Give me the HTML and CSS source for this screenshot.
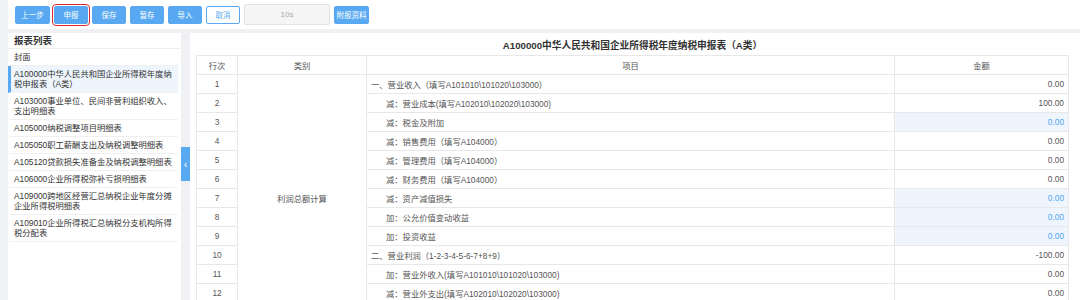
FILE: index.html
```html
<!DOCTYPE html>
<html lang="zh-CN">
<head>
<meta charset="UTF-8" />
<title>企业所得税年度纳税申报</title>
<link rel="stylesheet" href="styles.css">
</head>
<body>

<div class="toolbar">
  <button class="btn btn-wide">上一步</button>
  <button class="btn btn-marked">申报</button>
  <button class="btn">保存</button>
  <button class="btn">暂存</button>
  <button class="btn">导入</button>
  <button class="btn btn-plain">取消</button>
  <div class="timer">10s</div>
  <button class="btn btn-wide">附报资料</button>
</div>

<div class="workspace">
  <div class="sidebar">
    <div class="sidebar-title">报表列表</div>
    <ul class="report-list">
      <li>封面</li>
      <li class="active">A100000中华人民共和国企业所得税年度纳税申报表（A类）</li>
      <li>A103000事业单位、民间非营利组织收入、支出明细表</li>
      <li>A105000纳税调整项目明细表</li>
      <li>A105050职工薪酬支出及纳税调整明细表</li>
      <li>A105120贷款损失准备金及纳税调整明细表</li>
      <li>A106000企业所得税弥补亏损明细表</li>
      <li>A109000跨地区经营汇总纳税企业年度分摊企业所得税明细表</li>
      <li>A109010企业所得税汇总纳税分支机构所得税分配表</li>
    </ul>
  </div>

  <div class="gutter">
    <div class="collapse">&#8249;</div>
  </div>

  <div class="main">
    <h1 class="report-title">A100000中华人民共和国企业所得税年度纳税申报表（A类）</h1>
    <table class="report">
      <colgroup>
        <col class="c-no"><col class="c-cat"><col class="c-item"><col class="c-amt">
      </colgroup>
      <thead>
        <tr><th>行次</th><th>类别</th><th>项目</th><th>金额</th></tr>
      </thead>
      <tbody>
        <tr><td class="no">1</td><td class="cat" rowspan="13">利润总额计算</td><td>一、营业收入（填写A101010\101020\103000）</td><td class="amt">0.00</td></tr>
        <tr><td class="no">2</td><td class="sub">减：营业成本(填写A102010\102020\103000)</td><td class="amt">100.00</td></tr>
        <tr><td class="no">3</td><td class="sub">减：税金及附加</td><td class="amt edit">0.00</td></tr>
        <tr><td class="no">4</td><td class="sub">减：销售费用（填写A104000）</td><td class="amt">0.00</td></tr>
        <tr><td class="no">5</td><td class="sub">减：管理费用（填写A104000）</td><td class="amt">0.00</td></tr>
        <tr><td class="no">6</td><td class="sub">减：财务费用（填写A104000）</td><td class="amt">0.00</td></tr>
        <tr><td class="no">7</td><td class="sub">减：资产减值损失</td><td class="amt edit">0.00</td></tr>
        <tr><td class="no">8</td><td class="sub">加：公允价值变动收益</td><td class="amt edit">0.00</td></tr>
        <tr><td class="no">9</td><td class="sub">加：投资收益</td><td class="amt edit">0.00</td></tr>
        <tr><td class="no">10</td><td>二、营业利润（1-2-3-4-5-6-7+8+9）</td><td class="amt">-100.00</td></tr>
        <tr><td class="no">11</td><td class="sub">加：营业外收入(填写A101010\101020\103000)</td><td class="amt">0.00</td></tr>
        <tr><td class="no">12</td><td class="sub">减：营业外支出(填写A102010\102020\103000)</td><td class="amt">0.00</td></tr>
        <tr><td class="no">13</td><td>三、利润总额（10+11-12）</td><td class="amt">-100.00</td></tr>
      </tbody>
    </table>
  </div>
</div>

</body>
</html>
```

FILE: styles.css
```css
body {
  margin: 0;
  padding: 0 0 0 8px;
  background: #f0f1f4;
  font-family: "Liberation Sans", "Noto Sans CJK SC", sans-serif;
  color: #333;
  overflow: hidden;
}

/* top toolbar */
.toolbar {
  height: 29px;
  background: #fff;
  display: flex;
  align-items: center;
  gap: 4px;
  padding-left: 7px;
}
.btn {
  width: 34px;
  height: 18px;
  padding: 0;
  border: 1px solid #58a9f1;
  border-radius: 2px;
  background: #58a9f1;
  color: #fff;
  font-family: inherit;
  font-size: 7.5px;
  cursor: pointer;
}
.btn-wide {
  width: 35px;
}
.btn-marked {
  outline: 1px solid #e3262a;
  outline-offset: 1px;
}
.btn-plain {
  background: #fff;
  color: #58a9f1;
}
.timer {
  width: 84px;
  height: 19px;
  border: 1px solid #e2e2e2;
  border-radius: 2px;
  background: #f5f5f5;
  color: #aaa;
  font-size: 8px;
  display: flex;
  align-items: center;
  justify-content: center;
}

.workspace {
  display: flex;
  margin-top: 4px;
  height: 300px;
}

/* left list */
.sidebar {
  width: 173px;
  background: #fff;
  flex-shrink: 0;
}
.sidebar-title {
  height: 15px;
  line-height: 15px;
  padding-left: 6px;
  font-size: 9.5px;
  font-weight: bold;
  color: #333;
  border-bottom: 1px solid #eee;
}
.report-list {
  list-style: none;
  margin: 0;
  padding: 0;
}
.report-list li {
  margin-right: 3px;
  padding: 3px 5px 3px 3px;
  border-left: 3px solid transparent;
  border-bottom: 1px solid #f0f0f0;
  font-size: 8.3px;
  line-height: 10px;
  color: #333;
}
.report-list li.active {
  background: #eef5fd;
  border-left-color: #58a9f1;
}

.gutter {
  width: 9px;
  flex-shrink: 0;
}
.collapse {
  margin-top: 114px;
  height: 34px;
  background: #58a9f1;
  color: #fff;
  font-size: 11px;
  display: flex;
  align-items: center;
  justify-content: center;
}

/* report */
.main {
  flex: 1;
  background: #fff;
  padding: 0 11px 0 6px;
}
.report-title {
  margin: 0;
  height: 22px;
  line-height: 26px;
  text-align: center;
  font-size: 9.7px;
  font-weight: bold;
  color: #333;
}
.report {
  width: 100%;
  border-collapse: collapse;
  table-layout: fixed;
  font-size: 8.3px;
  color: #555;
}
.c-no { width: 41px; }
.c-cat { width: 129px; }
.c-amt { width: 174px; }
.report th,
.report td {
  height: 18px;
  padding: 0 4px;
  border: 1px solid #e8e8e8;
  white-space: nowrap;
}
.report th {
  font-weight: normal;
  text-align: center;
}
.report td.no,
.report td.cat {
  text-align: center;
}
.report td.sub {
  padding-left: 19px;
}
.report td.amt {
  text-align: right;
}
.report td.edit {
  background: #eef5fd;
  color: #4ea5f0;
}
```
